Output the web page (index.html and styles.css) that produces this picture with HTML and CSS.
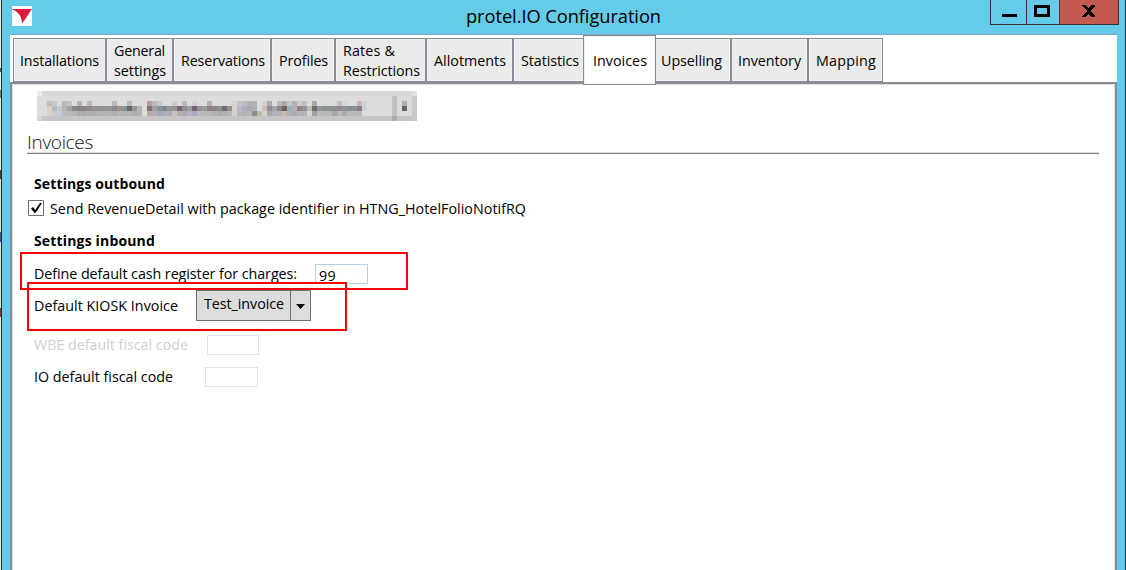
FILE: index.html
```
<!DOCTYPE html>
<html lang="en">
<head>
<meta charset="utf-8">
<title>protel.IO Configuration</title>
<link rel="stylesheet" href="styles.css">
</head>
<body>
<div class="window">
  <header class="titlebar">
    <svg class="logo" width="20" height="20" viewBox="0 0 20 20"><path fill="#fff" d="M0 0h20v20H0z"/><path fill="#df1b3f" d="M0 3H20L10.500 17H10Q9.500 10 5.500 6.500Q3 4 0 3.500Z"/></svg>
    <h1 class="title"><span data-w="195">protel.IO Configuration</span></h1>
    <div class="controls">
      <button class="ctl min" aria-label="Minimize"><svg width="35" height="24"><path d="M11 14h15v3H11z"/></svg></button>
      <button class="ctl max" aria-label="Maximize"><svg width="32" height="24"><path fill="none" stroke="#000" stroke-width="3" d="M8.500 6.500h13v9h-13z"/></svg></button>
      <button class="ctl close" aria-label="Close"><svg width="58" height="24" shape-rendering="crispEdges"><path d="M22 5h4l2.500 3.500L31 5h4v1l-5 5 5 5v1h-4l-2.500-3.500L26 17h-4v-1l5-5-5-5z"/></svg></button>
    </div>
  </header>
  <main class="client">
    <nav class="tabs">
      <a class="tab w93"><span data-w="79">Installations</span></a>
      <a class="tab w67"><span data-w="51">General</span><span data-w="52">settings</span></a>
      <a class="tab w98"><span data-w="84">Reservations</span></a>
      <a class="tab w64"><span data-w="49">Profiles</span></a>
      <a class="tab w91"><span data-w="52">Rates &amp;</span><span data-w="77">Restrictions</span></a>
      <a class="tab w87"><span data-w="72">Allotments</span></a>
      <a class="tab w72"><span data-w="58">Statistics</span></a>
      <a class="tab active"><span data-w="54">Invoices</span></a>
      <a class="tab w77 after"><span data-w="61">Upselling</span></a>
      <a class="tab w77"><span data-w="63">Inventory</span></a>
      <a class="tab w75"><span data-w="60">Mapping</span></a>
    </nav>
    <section class="panel">
      <svg id="hotel" class="hotel" width="380" height="30" shape-rendering="crispEdges"></svg>
      <h2 class="heading"><span data-w="66">Invoices</span></h2>
      <h3 class="sub outbound"><span data-w="131">Settings outbound</span></h3>
      <div class="row check">
        <svg width="16" height="16"><path fill="#fff" stroke="#707070" d="M.5.5h15v15H.5z"/><path d="M3 8.500L5 7l2.200 3L12 3h2L7.500 13H6.500Z"/></svg>
        <span data-w="476">Send RevenueDetail with package identifier in HTNG_HotelFolioNotifRQ</span>
      </div>
      <h3 class="sub inbound"><span data-w="121">Settings inbound</span></h3>
      <div class="mark mark-register">
        <span data-w="263">Define default cash register for charges:</span><div class="field focus"><span data-w="17">99</span></div>
      </div>
      <div class="mark mark-kiosk">
        <span data-w="144">Default KIOSK Invoice</span>
        <div class="combo"><span data-w="80">Test_invoice</span><i><svg width="19" height="29"><path d="M5 13h9l-4.500 5z"/></svg></i></div>
      </div>
      <div class="row fiscal disabled"><span data-w="154">WBE default fiscal code</span><div class="field wbe"></div></div>
      <div class="row fiscal"><span data-w="139">IO default fiscal code</span><div class="field io"></div></div>
    </section>
  </main>
</div>
<script src="app.js"></script>
</body>
</html>
```
FILE: styles.css
```
* { box-sizing: border-box; }
body { margin: 0; width: 1126px; height: 570px; overflow: hidden; font: 14.3px/20px "Open Sans", "Noto Sans", sans-serif; color: #000; background: linear-gradient(#e8e6e1 0 68px, #555 68px 72px, #eee 72px 90px, #777 90px 98px, #e8e8e8 98px 170px, #5b3930 170px 179px, #ddd 179px 232px, #315887 232px 242px, #ddd 242px 308px, #7b3b4e 308px 317px, #e5e5e5 317px); }
span { display: inline-block; white-space: nowrap; }
h1, h2, h3 { margin: 0; font-weight: 400; }
.window { height: 570px; margin-left: 1px; border: solid #17333e; border-width: 0 1px; background: #66cae9; padding: 0 8px; display: flex; flex-direction: column; }
.titlebar { height: 34px; display: flex; position: relative; flex: none; }
.logo { margin: 6px 0 0 2px; }
.title { margin: 3px 0 0 434px; font-size: 18.300px; line-height: 26px; }
.controls { display: flex; margin-left: auto; margin-right: -2px; height: 25px; border: solid #333; border-width: 0 1px 1px; }
.ctl { padding: 0; border: 0; background: none; display: flex; }
.ctl + .ctl { border-left: 1px solid #333; }
.min { width: 35px; }
.max { width: 33px; }
.ctl.close { width: 59px; background: #c35a50; border-left-color: #6b2a25; }
.client { flex: 1; border-top: 1px solid #7ba8c3; background: #fff; display: flex; flex-direction: column; }
.tabs { height: 48px; padding: 3px 0 0 3px; display: flex; align-items: flex-start; flex: none; }
.tab { height: 44px; border: 1px solid #898c95; background: #ebebeb; box-shadow: inset 0 0 0 1px #f2f2f2; padding: 2px 0 0 7px; display: flex; flex-direction: column; justify-content: center; align-items: flex-start; flex: none; }
.tab.active { width: 73px; height: 50px; margin: -3px -2px 0; padding-left: 9px; background: #fff; position: relative; z-index: 2; }
.w93 { width: 93px; padding-left: 6px; }
.w67 { width: 67px; }
.w98 { width: 98px; }
.w64 { width: 64px; }
.w91 { width: 91px; }
.w87 { width: 87px; }
.w72 { width: 72px; }
.w77 { width: 77px; padding-left: 6px; }
.w75 { width: 75px; }
.panel { flex: 1; margin-top: -1px; border: solid #898c95; border-width: 2px 2px 0; box-shadow: inset 1px 1px #dfe0e4, inset -1px 0 #dfe0e4; padding: 7px 15px 0; display: flex; flex-direction: column; align-items: flex-start; }
.hotel { margin-left: 10px; flex: none; }
.heading { width: 1072px; height: 33px; border-bottom: 1px solid #808080; box-shadow: inset 0 -1px #dedede; font-size: 19px; font-weight: 300; line-height: 26px; padding: 8px 0 0; color: #111; }
.sub { font-size: 14px; font-weight: 700; height: 20px; padding-left: 7px; }
.outbound { margin-top: 20px; }
.row { display: flex; }
.check { margin: 5px 0 0 1px; height: 20px; gap: 6px; }
.check svg { margin-top: 1px; }
.inbound { margin-top: 12px; }
.mark { border: 2px solid #f00; display: flex; }
.mark > span, .fiscal > span { padding-top: 1px; }
.mark-register { margin: 1px 0 0 -7px; width: 388px; height: 38px; padding: 9px 0 0 12px; }
.field { width: 53px; height: 20px; border: 1px solid #e2e3ea; background: #fff; }
.focus { margin: 1px 0 0 18px; border-color: #b5cfe7; padding-left: 3px; line-height: 21px; }
.mark-kiosk { margin-top: -8px; width: 320px; height: 49px; padding: 11px 0 0 5px; position: relative; z-index: 1; }
.combo { width: 115px; height: 31px; margin: -5px 0 0 18px; border: 1px solid #707070; background: #ddd; display: flex; padding: 3px 0 0 7px; }
.combo i { height: 29px; width: 20px; margin: -3px 0 0 auto; border-left: 1px solid #707070; }
.fiscal { margin: 3px 0 0 7px; height: 20px; }
.fiscal + .fiscal { margin-top: 12px; }
.disabled { color: #d0d0d0; }
.wbe { width: 52px; margin-left: 19px; margin-top: 1px; }
.io { margin-left: 32px; margin-top: 1px; }
```
FILE: app.js
```
for (const el of document.querySelectorAll("[data-w]")) {
  const n = el.textContent.length;
  el.style.letterSpacing = (Number(el.dataset.w) - el.getBoundingClientRect().width) / n + "px";
}

// Obscured hotel selector: 5px mosaic cells, as start index followed by colours.
const svg = document.getElementById("hotel");
const block = (x, y, w, h, fill) => {
  const r = document.createElementNS("http://www.w3.org/2000/svg", "rect");
  for (const [k, v] of Object.entries({ x, y, width: w, height: h, fill })) r.setAttribute(k, v);
  svg.append(r);
};
block(0, 0, 380, 30, "#dcdcdc");
block(0, 0, 380, 5, "#d8d8d8");
block(0, 0, 5, 5, "#ececec");
block(5, 25, 375, 5, "#c6c6c6");
block(0, 25, 5, 5, "#d4d4d4");
const mosaic = [
  [10, 2, "c4bba9 c0c8d4 - b9b9b9 c4c4bf - b5b5b5 - bbbbbb - - - - bbbbbb - - bbbbbb - - dcdcd4 aaa0a6 c4b8ac bfc8d4 - - cccccc - bbbbbb - d0d0d0 - - b9b0b5 - - - - d9d0c8 c0c2d4 bbbbbb b0b0b0 b0b0b0 - d5d0c8 aaaab0 - bbbbbb aaaaaa bec6d0 b0b0b5 d4ccc4 b8c2cc - aaaaaa - - - - cbbcc0 d2d8dc - - c8b8bc ccd2da"],
  [15, 2, "dbd2c4 b5bbc8 c8cad2 b5b5b2 9fa3a6 8c8588 888488 888488 918b88 8e9292 929090 8f9498 8f9498 8c8a8c 9c9284 879398 6a6670 949896 b4b6b4 dcdcd4 807078 a8a0a0 8c94a0 7d8b90 929698 9a9290 766864 8c8c98 a09aa0 746678 8f9498 9a9c9a 8c8284 8c8284 8c9090 706c74 8c9090 dbd2c8 b4b8c8 b0b0b4 a8a6b8 aeb0ac - c8c0b8 8e8e92 a4a4a4 868686 74605a 9ab0b8 b0b0b8 8c8480 909498 c0b8ac 6a6a72 8f9494 8a9090 889098 8c9090 908890 8e9498 8c8c90 8e9090 888084 ccd2da"],
  [20, 2, "ddd3c5 c8ccd4 c8ccd4 bdbdb9 b9bbbb b5b5bd b2aaa8 aaa8b0 b8aeac aeb0ae b6b6b0 b5b5b5 b5b5b5 acadb5 bbb5ac b0b5b4 b8b4ae a9adab b0b4b0 dddcd5 baaba8 b2aeb5 a0a9b4 a9adb9 aeb1b3 c8c4ba b6acaa aaaab8 b5b6bb b0a6bc bbb8b3 b4bab8 b5b9bc b7b3ad acaab1 b3b3b3 b9b7b5 d8d0c9 aebbc4 b0b4c0 b6b6b6 8e8e8e bbbbb4 d5d0c8 aaaab0 b4b4b4 b4b4b4 c8b8b0 a8b2bc a8adb3 b5b5b5 aeb5bb d9d7d1 9ba19e bababa b8bcbc b2b7b8 aaa2ac b5bbbf a8acaf b7bbb9 bababa bababa"],
];
for (const [y, start, row] of mosaic)
  row.split(" ").forEach((c, i) => c !== "-" && block((start + i) * 5, y, 5, 5, "#" + c));
block(355, 5, 5, 20, "#c1c1c1");
block(355, 25, 5, 5, "#adadad");
block(375, 0, 5, 5, "#e1e1e1");
block(375, 5, 5, 25, "#cacaca");
block(365, 10, 5, 5, "#afafaf");
block(365, 15, 5, 5, "#666666");
```
